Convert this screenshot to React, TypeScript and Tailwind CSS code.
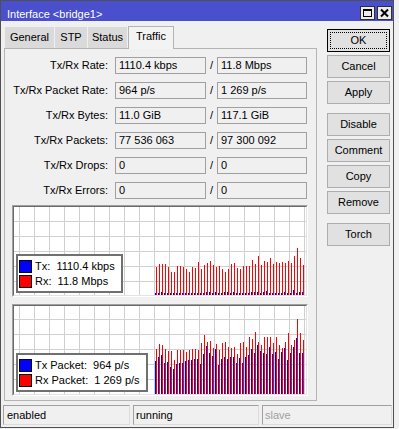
import React from "react";

const rows: [string, string, string][] = [
  ["Tx/Rx Rate:", "1110.4 kbps", "11.8 Mbps"],
  ["Tx/Rx Packet Rate:", "964 p/s", "1 269 p/s"],
  ["Tx/Rx Bytes:", "11.0 GiB", "117.1 GiB"],
  ["Tx/Rx Packets:", "77 536 063", "97 300 092"],
  ["Tx/Rx Drops:", "0", "0"],
  ["Tx/Rx Errors:", "0", "0"],
];

const red1 = [28, 31, 31, 31, 28, 23, 23, 29, 29, 28, 26, 23, 28, 27, 33, 26, 30, 32, 34, 30, 28, 29, 26, 23, 26, 31, 32, 27, 26, 29, 29, 29, 35, 31, 39, 30, 34, 33, 37, 31, 33, 32, 33, 32, 34, 32, 39, 47, 37, 30];
const blue1 = [2, 2, 3, 2, 2, 2, 2, 2, 2, 2, 2, 2, 2, 2, 2, 2, 2, 3, 3, 2, 3, 2, 2, 3, 3, 2, 3, 2, 2, 2, 2, 2, 3, 3, 3, 2, 3, 4, 2, 2, 2, 2, 2, 3, 2, 2, 5, 2, 3, 3];
const blue2 = [33, 37, 39, 31, 32, 27, 25, 30, 31, 31, 33, 34, 34, 35, 35, 30, 40, 48, 41, 38, 45, 29, 35, 37, 35, 37, 37, 31, 36, 31, 37, 39, 45, 41, 49, 43, 41, 40, 47, 40, 42, 35, 42, 46, 34, 41, 47, 56, 41, 41];
const red2 = [45, 50, 49, 45, 43, 43, 34, 44, 44, 44, 42, 44, 45, 45, 44, 51, 59, 52, 53, 46, 50, 44, 51, 52, 47, 46, 47, 40, 51, 52, 47, 57, 55, 62, 52, 49, 57, 57, 57, 51, 57, 49, 46, 52, 61, 49, 54, 75, 61, 54];

function Graph({
  blue,
  red,
  gridY,
  legend,
  className,
}: {
  blue: number[];
  red: number[];
  gridY: number;
  legend: [string, string];
  className: string;
}) {
  const W = 292;
  const H = 88;
  const vx: number[] = [];
  for (let x = 5; x < W; x += 15) vx.push(x);
  const hy: number[] = [];
  for (let y = gridY; y < H; y += 15) hy.push(y);
  return (
    <div className={`ml-[7px] w-[296px] h-[92px] border border-t-[#a0a0a0] border-l-[#a0a0a0] border-r-white border-b-white ${className}`}>
      <div className="relative w-full h-full border border-t-[#6a6a6a] border-l-[#6a6a6a] border-r-[#e3e3e3] border-b-[#e3e3e3] bg-white">
        <svg width={W} height={H} className="block">
          {vx.map((x) => (
            <rect key={"v" + x} x={x} y={0} width={1} height={H} fill="#d0d0d0" />
          ))}
          {hy.map((y) => (
            <rect key={"h" + y} x={0} y={y} width={W} height={1} fill="#d0d0d0" />
          ))}
          {red.map((h, i) => (
            <rect key={"r" + i} x={142 + 3 * i} y={H - h} width={1} height={h} fill="#ff0000" />
          ))}
          {blue.map((h, i) => (
            <rect key={"b" + i} x={141 + 3 * i} y={H - h} width={1} height={h} fill="#0000ff" />
          ))}
        </svg>
        <div className="absolute left-[2px] bottom-[2px] bg-white border-2 border-[#707070] pl-[1px] pr-[6px] pt-[3px] pb-[2px] flex flex-col">
          {legend.map((t, i) => (
            <div key={t} className="flex items-center h-[15px]">
              <div className={`w-[13px] h-[13px] border border-black ${i === 0 ? "bg-[#0000ff]" : "bg-[#ff0000]"}`} />
              <span className="ml-[3px] whitespace-pre leading-[13px] text-black">{t}</span>
            </div>
          ))}
        </div>
      </div>
    </div>
  );
}

function Btn({ label, def, className = "" }: { label: string; def?: boolean; className?: string }) {
  return (
    <div
      className={`relative w-[63px] h-[23px] flex items-center justify-center bg-[#e1e1e1] border ${
        def ? "border-black" : "border-[#adadad]"
      } ${className}`}
    >
      {def && <div className="absolute inset-[2px] border border-dotted border-black" />}
      <span className="leading-[13px]">{label}</span>
    </div>
  );
}

export default function App() {
  return (
    <div className="w-[399px] h-[429px] bg-[#f0f0f0] text-[11px] text-black font-['Liberation_Sans',Arial,sans-serif] overflow-hidden">
      <div className="w-[394px] h-[428px] border border-[#505050] flex flex-col bg-[#f0f0f0]">
        {/* title bar */}
        <div className="h-[20px] bg-[#4a4fce] flex items-start shrink-0">
          <div className="pl-[6px] pt-[6px] leading-[14px] text-white text-[11px] flex-1">Interface &lt;bridge1&gt;</div>
          <div className="mt-[5px] w-[15px] h-[14px] bg-[#ececec] border border-[#303030] flex items-center justify-center">
            <svg width="11" height="10" viewBox="0 0 11 10">
              <rect x="1.5" y="1.5" width="8" height="7" fill="none" stroke="#000" strokeWidth="1" />
              <rect x="1" y="1" width="9" height="2" fill="#000" />
            </svg>
          </div>
          <div className="mt-[5px] ml-[2px] mr-[1px] w-[15px] h-[14px] bg-[#ececec] border border-[#303030] flex items-center justify-center">
            <svg width="11" height="10" viewBox="0 0 11 10">
              <path d="M2 1.5 L9 8.5 M9 1.5 L2 8.5" stroke="#000" strokeWidth="2" fill="none" />
            </svg>
          </div>
        </div>

        {/* main */}
        <div className="h-[380px] flex shrink-0">
          <div className="ml-[3px] w-[313px] flex flex-col">
            <div className="h-[27px] flex items-end pl-[1px] gap-[1px]">
              <div className="w-[49px] h-[21px] bg-[#dadada] flex items-center justify-center leading-[13px]">General</div>
              <div className="w-[32px] h-[21px] bg-[#dadada] flex items-center justify-center leading-[13px]">STP</div>
              <div className="w-[39px] h-[21px] bg-[#dadada] flex items-center justify-center leading-[13px]">Status</div>
              <div className="relative top-[1px] z-10 w-[46px] h-[23px] bg-[#f3f3f3] border border-b-0 border-[#b4b4b4] flex items-center justify-center pb-[3px] leading-[13px]">
                Traffic
              </div>
            </div>
            <div className="h-[353px] border border-[#b4b4b4] bg-[#f0f0f0] flex flex-col pt-[8px]">
              <div className="flex flex-col gap-[8px]">
                {rows.map(([l, a, b]) => (
                  <div key={l} className="flex items-center h-[17px]">
                    <div className="w-[103px] text-right leading-[13px]">{l}</div>
                    <div className="ml-[7px] w-[91px] h-[17px] border border-[#a0a0a0] pl-[3px] leading-[15px] whitespace-pre">{a}</div>
                    <div className="w-[11px] text-center leading-[13px]">/</div>
                    <div className="w-[90px] h-[17px] border border-[#a0a0a0] pl-[3px] leading-[15px] whitespace-pre">{b}</div>
                  </div>
                ))}
              </div>
              <Graph
                className="mt-[6px]"
                blue={blue1}
                red={red1}
                gridY={14}
                legend={["Tx:  1110.4 kbps", "Rx:  11.8 Mbps"]}
              />
              <Graph
                className="mt-[7px]"
                blue={blue2}
                red={red2}
                gridY={13}
                legend={["Tx Packet:  964 p/s", "Rx Packet:  1 269 p/s"]}
              />
            </div>
          </div>
          <div className="ml-[10px] pt-[8px] flex flex-col gap-[3px]">
            <Btn label="OK" def />
            <Btn label="Cancel" />
            <Btn label="Apply" />
            <Btn label="Disable" className="mt-[6px]" />
            <Btn label="Comment" />
            <Btn label="Copy" />
            <Btn label="Remove" />
            <Btn label="Torch" className="mt-[6px]" />
          </div>
        </div>

        {/* status bar */}
        <div className="pt-[4px] pl-[2px] flex gap-[3px] shrink-0">
          <div className="w-[127px] h-[20px] border border-t-[#a0a0a0] border-l-[#a0a0a0] border-r-[#dcdcdc] border-b-[#dcdcdc] pl-[3px] leading-[18px]">enabled</div>
          <div className="w-[126px] h-[20px] border border-t-[#a0a0a0] border-l-[#a0a0a0] border-r-[#dcdcdc] border-b-[#dcdcdc] pl-[2px] leading-[18px]">running</div>
          <div className="w-[130px] h-[20px] border border-t-[#a0a0a0] border-l-[#a0a0a0] border-r-[#dcdcdc] border-b-[#dcdcdc] pl-[2px] leading-[18px] text-[#a0a0a0]">slave</div>
        </div>
      </div>
    </div>
  );
}
